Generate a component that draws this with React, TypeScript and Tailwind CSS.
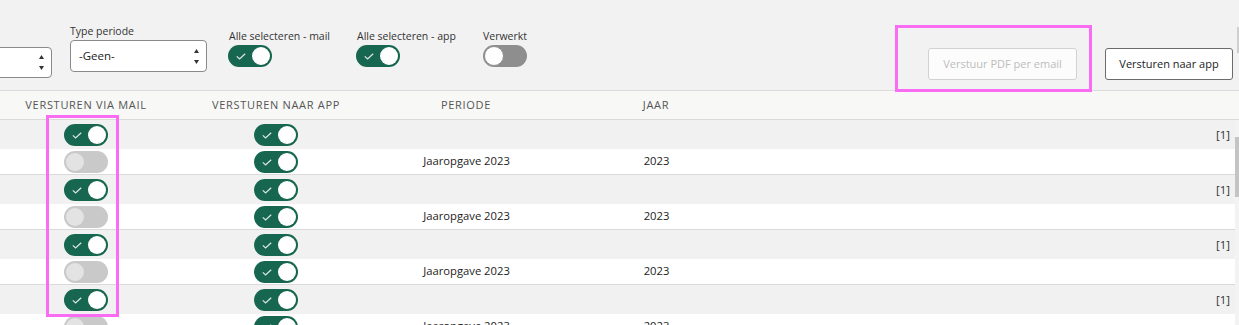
import React from "react";

type TV = "on" | "offLight" | "offDark";

function Toggle({ v }: { v: TV }) {
  if (v === "on") {
    return (
      <div className="relative w-[44px] h-[22px] rounded-full bg-[#17664f] shrink-0">
        <svg className="absolute left-[8px] top-[8px]" width="10" height="7" viewBox="0 0 10 7">
          <path d="M0.8 3.4 L3.6 6 L9.2 0.7" fill="none" stroke="#dce8e3" strokeWidth="1.2" />
        </svg>
        <div className="absolute right-[2px] top-[2px] w-[18px] h-[18px] rounded-full bg-white" />
      </div>
    );
  }
  if (v === "offLight") {
    return (
      <div className="relative w-[44px] h-[22px] rounded-full bg-[#c9c9c9] shrink-0">
        <div className="absolute left-[2px] top-[2px] w-[18px] h-[18px] rounded-full bg-[#e3e3e3]" />
      </div>
    );
  }
  return (
    <div className="relative w-[44px] h-[22px] rounded-full bg-[#8e8e8e] shrink-0">
      <div className="absolute left-[1px] top-[1px] w-[20px] h-[20px] rounded-full bg-white border border-[#8e8e8e]" />
    </div>
  );
}

function Arrows() {
  return (
    <div className="flex flex-col gap-[7px]">
      <svg width="5" height="4" viewBox="0 0 5 4">
        <path d="M2.5 0 L5 4 L0 4 Z" fill="#333" />
      </svg>
      <svg width="5" height="4" viewBox="0 0 5 4">
        <path d="M0 0 L5 0 L2.5 4 Z" fill="#333" />
      </svg>
    </div>
  );
}

const cols = "grid grid-cols-[181px_190px_190px_190px_1fr]";

function GroupRow() {
  return (
    <div className={`${cols} h-[29px] bg-[#f1f1f1] items-center`}>
      <div className="flex justify-center pr-[9px]">
        <Toggle v="on" />
      </div>
      <div className="flex justify-center">
        <Toggle v="on" />
      </div>
      <div />
      <div />
      <div className="text-right pr-[5px] text-[11.5px] text-[#333]">[1]</div>
    </div>
  );
}

function DetailRow() {
  return (
    <div className={`${cols} h-[26px] bg-white border-b border-[#dadada] items-center`}>
      <div className="flex justify-center pr-[9px]">
        <Toggle v="offLight" />
      </div>
      <div className="flex justify-center">
        <Toggle v="on" />
      </div>
      <div className="text-center text-[11.25px] text-[#222] pl-[1px]">Jaaropgave 2023</div>
      <div className="text-center text-[11.25px] text-[#222] pl-[1px]">2023</div>
      <div />
    </div>
  );
}

export default function App() {
  return (
    <div className="relative w-[1239px] h-[325px] overflow-hidden bg-white font-['Segoe_UI','Open_Sans',sans-serif] text-[#333]">
      {/* top panel */}
      <div className="flex items-start h-[91px] bg-[#f2f2f2] border-b border-[#dcdcdc]">
        <div className="ml-[-48px] mt-[47px] w-[100px] h-[31px] rounded-[4px] border border-[#8a8a8a] bg-white flex items-center justify-end pr-[7px] shrink-0">
          <Arrows />
        </div>
        <div className="ml-[18px] mt-[24px] w-[137px] flex flex-col shrink-0">
          <div className="text-[10.5px] leading-[15px] text-[#333] h-[16px]">Type periode</div>
          <div className="w-[137px] h-[32px] rounded-[4px] border border-[#8a8a8a] bg-white flex items-center justify-between pl-[8px] pr-[7px]">
            <span className="text-[11.5px] text-[#222]">-Geen-</span>
            <Arrows />
          </div>
        </div>
        <div className="ml-[21px] mt-[29px] w-[128px] flex flex-col gap-[1px] shrink-0">
          <div className="text-[10.5px] leading-[15px] text-[#333] pl-[1px]">Alle selecteren - mail</div>
          <Toggle v="on" />
        </div>
        <div className="mt-[29px] w-[127px] flex flex-col gap-[1px] shrink-0">
          <div className="text-[10.5px] leading-[15px] text-[#333] pl-[1px]">Alle selecteren - app</div>
          <Toggle v="on" />
        </div>
        <div className="mt-[29px] flex flex-col gap-[1px] shrink-0">
          <div className="text-[10.5px] leading-[15px] text-[#333]">Verwerkt</div>
          <Toggle v="offDark" />
        </div>
        <div className="ml-auto mt-[48px] flex items-center gap-[28px] pr-[6px]">
          <button className="w-[149px] h-[32px] rounded-[3px] border border-[#d2d2d2] bg-[#fcfcfc] text-[11px] text-[#bdbdbd]">
            Verstuur PDF per email
          </button>
          <button className="w-[128px] h-[32px] rounded-[3px] border border-[#6b6b6b] bg-white text-[11px] text-[#222]">
            Versturen naar app
          </button>
        </div>
      </div>

      {/* table header */}
      <div className={`${cols} h-[29px] bg-[#f8f8f6] border-b border-[#dadada] items-center text-[11px] tracking-[0.7px] text-[#555]`}>
        <div className="text-center pr-[9px]">VERSTUREN VIA MAIL</div>
        <div className="text-center">VERSTUREN NAAR APP</div>
        <div className="text-center">PERIODE</div>
        <div className="text-center">JAAR</div>
        <div />
      </div>

      {/* body */}
      <div className="flex">
        <div className="flex-1 flex flex-col">
          <GroupRow />
          <DetailRow />
          <GroupRow />
          <DetailRow />
          <GroupRow />
          <DetailRow />
          <GroupRow />
          <DetailRow />
        </div>
        <div className="w-[4px] flex flex-col bg-[#f3f3f3]">
          <div className="h-[17px]" />
          <div className="h-[60px] bg-[#c4c4c4]" />
        </div>
      </div>

      {/* annotation overlays */}
      <div className="absolute left-[895px] top-[25px] w-[197px] h-[67px] border-[3px] border-[#f96cf4] pointer-events-none" />
      <div className="absolute left-[46px] top-[115px] w-[73px] h-[202px] border-[3px] border-[#f96cf4] pointer-events-none" />
      <div className="absolute left-[1237px] top-[27px] w-[2px] h-[26px] bg-[#cfcfcf]" />
    </div>
  );
}
